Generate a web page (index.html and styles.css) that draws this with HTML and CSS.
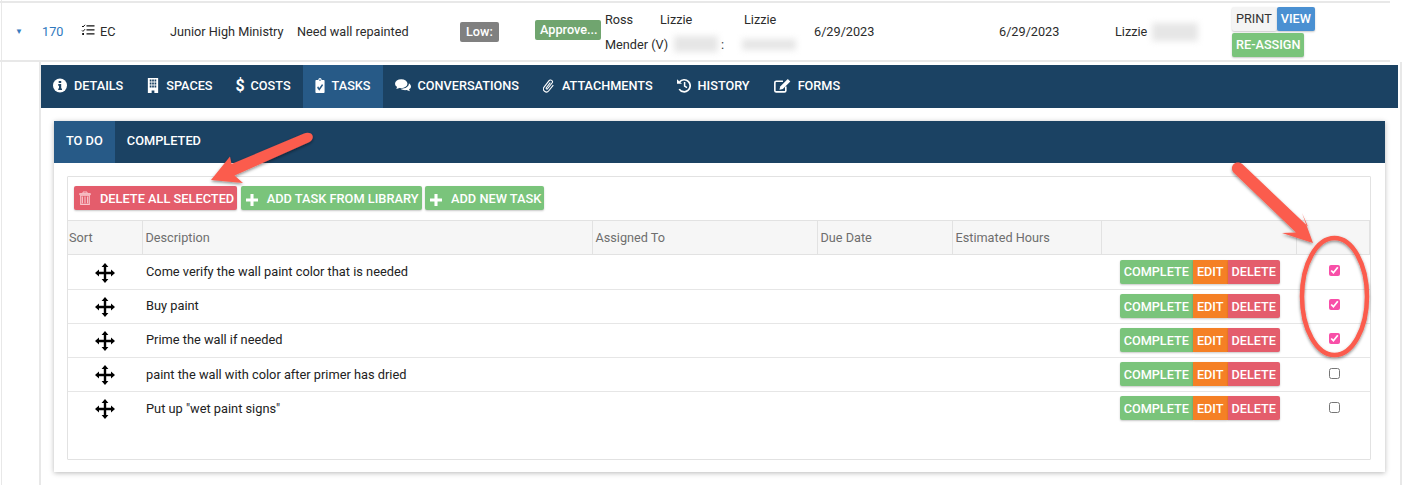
FILE: index.html
```html
<!DOCTYPE html>
<html lang="en">
<head>
<meta charset="utf-8">
<title>Tasks</title>
<link rel="stylesheet" href="styles.css">
</head>
<body>
<svg width="0" height="0" class="defs">
  <defs>
    <symbol id="move" viewBox="0 0 20 20">
      <path d="M10 0 13.4 4H11.2V8.8H16V6.6L20 10 16 13.4V11.2H11.2V16H13.4L10 20 6.6 16H8.8V11.2H4V13.4L0 10 4 6.6V8.8H8.8V4H6.6Z" fill="#000"/>
    </symbol>
    <symbol id="plus" viewBox="0 0 14 14">
      <path d="M5.2 0H8.8V5.2H14V8.8H8.8V14H5.2V8.8H0V5.2H5.2Z" fill="#fff"/>
    </symbol>
  </defs>
</svg>
<div class="page">
  <div class="job-row">
    <span class="caret">▼</span>
    <a class="job-id">170</a>
    <span class="job-type">
      <svg class="list-icon" viewBox="0 0 14 12"><path d="M1 2 2 3 4 .8M1 6.4 2 7.4 4 5.2" fill="none" stroke="#111" stroke-width="1"/><path d="M5.5 1.2H13.5V2.6H5.5ZM5.5 5.2H13.5V6.6H5.5ZM5.5 9.2H13.5V10.6H5.5ZM1.2 9.1H3V10.9H1.2Z" fill="#111"/></svg>
      EC
    </span>
    <span>Junior High Ministry</span>
    <span>Need wall repainted</span>
    <span><b class="label label-low">Low:</b></span>
    <span><b class="label label-approved">Approve...</b></span>
    <div class="stack">
      <span>Ross</span>
      <span>Mender (V)</span>
    </div>
    <div class="stack">
      <span>Lizzie</span>
      <span class="with-blur"><i class="blur blur-a"></i>:</span>
    </div>
    <div class="stack">
      <span>Lizzie</span>
      <span class="with-blur"><i class="blur blur-b"></i></span>
    </div>
    <span>6/29/2023</span>
    <span>6/29/2023</span>
    <span class="with-blur">Lizzie<i class="blur blur-c"></i></span>
    <div class="job-actions">
      <div class="action-line">
        <a class="btn btn-light">PRINT</a><a class="btn btn-blue">VIEW</a>
      </div>
      <a class="btn btn-green">RE-ASSIGN</a>
    </div>
  </div>

  <div class="detail">
    <nav class="main-tabs">
      <a class="main-tab">
        <svg class="tab-icon" viewBox="0 0 14 14"><circle cx="7" cy="7" r="7" fill="#fff"/><path d="M5.7 2.4H8.2V4.5H5.7ZM5.2 5.6H8.2V10H9V11.6H5.2V10H6V7.2H5.2Z" fill="#1b4263"/></svg>
        DETAILS</a>
      <a class="main-tab">
        <svg class="tab-icon icon-narrow" viewBox="0 0 14 15" preserveAspectRatio="none"><path d="M1 0H13V15H8.6V12.4H5.4V15H1Z" fill="#fff"/><path d="M3.2 1.6H5.2V3.6H3.2ZM6 1.6H8V3.6H6ZM8.8 1.6H10.8V3.6H8.8ZM3.2 4.6H5.2V6.6H3.2ZM6 4.6H8V6.6H6ZM8.8 4.6H10.8V6.6H8.8ZM3.2 7.6H5.2V9.6H3.2ZM6 7.6H8V9.6H6ZM8.8 7.6H10.8V9.6H8.8Z" fill="#1b4263"/></svg>
        SPACES</a>
      <a class="main-tab tab-dollar">
        <span class="dollar">$</span>
        COSTS</a>
      <a class="main-tab is-active">
        <svg class="tab-icon icon-clip" viewBox="0 0 14 15" preserveAspectRatio="none"><path d="M1.5 2H4.6C4.8.7 5.8 0 7 0S9.2.7 9.4 2H12.5C13 2 13.4 2.4 13.4 3V14C13.4 14.6 13 15 12.5 15H1.5C1 15 .6 14.6.6 14V3C.6 2.4 1 2 1.5 2Z" fill="#fff"/><path d="M3.6 9 6 11.4 10.6 6.6" fill="none" stroke="#275a87" stroke-width="2"/><circle cx="7" cy="2.2" r=".9" fill="#275a87"/></svg>
        TASKS</a>
      <a class="main-tab">
        <svg class="tab-icon icon-talk" viewBox="0 0 18 14"><ellipse cx="7" cy="5" rx="7" ry="5" fill="#fff"/><path d="M2.5 8 1.5 11 6 9.4Z" fill="#fff"/><path d="M15.7 4.6C17 5.5 18 6.8 18 8.1 18 9.5 17.1 10.6 15.8 11.3L16.8 13.6 13 12.2C11 12.5 8 12.2 6.4 10.7 11 11 15.6 9 15.7 4.6Z" fill="#fff"/></svg>
        CONVERSATIONS</a>
      <a class="main-tab">
        <svg class="tab-icon icon-narrow" viewBox="0 0 14 15"><path d="M10 4v8.5a3.5 3.5 0 0 1-7 0V3a2.2 2.2 0 0 1 4.4 0v8.5a.9.9 0 0 1-1.8 0V4" fill="none" stroke="#fff" stroke-width="1.3" transform="rotate(38 7 7.5) translate(.6 0)"/></svg>
        ATTACHMENTS</a>
      <a class="main-tab">
        <svg class="tab-icon" viewBox="0 0 14 14"><path d="M2.6 3.4A6 6 0 1 1 2.2 10.6" fill="none" stroke="#fff" stroke-width="1.7"/><path d="M0 .8 5 5.2H0Z" fill="#fff"/><path d="M7.6 3.6V7.6L10 9.2" fill="none" stroke="#fff" stroke-width="1.5"/></svg>
        HISTORY</a>
      <a class="main-tab">
        <svg class="tab-icon icon-form" viewBox="0 0 18 15"><path d="M9.5 3H2.4C1.5 3 .9 3.6.9 4.5V13C.9 13.9 1.5 14.3 2.4 14.3H11C11.9 14.3 12.5 13.9 12.5 13V8.5" fill="none" stroke="#fff" stroke-width="1.7"/><path d="M14.6.6 17.3 3.3 9.3 11.3 5.8 12 6.6 8.6Z" fill="#fff"/></svg>
        FORMS</a>
    </nav>

    <section class="panel">
      <div class="sub-tabs">
        <a class="sub-tab is-active">TO DO</a>
        <a class="sub-tab">COMPLETED</a>
      </div>
      <div class="panel-body">
        <div class="task-box">
          <div class="toolbar">
            <a class="btn btn-red btn-tool">
              <svg class="trash" viewBox="0 0 12 14"><path d="M.6 2.6H11.4V3.7H.6ZM4 2.6V1H8V2.6" fill="none" stroke="#f8c6cc" stroke-width="1"/><path d="M1.7 4.2H10.3V13.4H1.7ZM3.4 5.4V12.2M6 5.4V12.2M8.6 5.4V12.2" fill="none" stroke="#f8c6cc" stroke-width="1.1"/></svg>
              DELETE ALL SELECTED</a>
            <a class="btn btn-green btn-tool"><svg class="plus"><use href="#plus"/></svg>ADD TASK FROM LIBRARY</a>
            <a class="btn btn-green btn-tool"><svg class="plus"><use href="#plus"/></svg>ADD NEW TASK</a>
          </div>
          <table class="tasks">
            <colgroup>
              <col class="c-sort"><col class="c-desc"><col class="c-assign"><col class="c-due"><col class="c-hours"><col class="c-act"><col class="c-check">
            </colgroup>
            <thead>
              <tr><th>Sort</th><th>Description</th><th>Assigned To</th><th>Due Date</th><th>Estimated Hours</th><th></th><th></th></tr>
            </thead>
            <tbody>
              <tr>
                <td class="sort"><svg class="move"><use href="#move"/></svg></td>
                <td class="desc">Come verify the wall paint color that is needed</td><td></td><td></td><td></td>
                <td class="acts"><div class="row-actions"><a class="btn btn-green">COMPLETE</a><a class="btn btn-orange">EDIT</a><a class="btn btn-red">DELETE</a></div></td>
                <td class="check"><input type="checkbox" checked></td>
              </tr>
              <tr>
                <td class="sort"><svg class="move"><use href="#move"/></svg></td>
                <td class="desc">Buy paint</td><td></td><td></td><td></td>
                <td class="acts"><div class="row-actions"><a class="btn btn-green">COMPLETE</a><a class="btn btn-orange">EDIT</a><a class="btn btn-red">DELETE</a></div></td>
                <td class="check"><input type="checkbox" checked></td>
              </tr>
              <tr>
                <td class="sort"><svg class="move"><use href="#move"/></svg></td>
                <td class="desc">Prime the wall if needed</td><td></td><td></td><td></td>
                <td class="acts"><div class="row-actions"><a class="btn btn-green">COMPLETE</a><a class="btn btn-orange">EDIT</a><a class="btn btn-red">DELETE</a></div></td>
                <td class="check"><input type="checkbox" checked></td>
              </tr>
              <tr>
                <td class="sort"><svg class="move"><use href="#move"/></svg></td>
                <td class="desc">paint the wall with color after primer has dried</td><td></td><td></td><td></td>
                <td class="acts"><div class="row-actions"><a class="btn btn-green">COMPLETE</a><a class="btn btn-orange">EDIT</a><a class="btn btn-red">DELETE</a></div></td>
                <td class="check"><input type="checkbox"></td>
              </tr>
              <tr>
                <td class="sort"><svg class="move"><use href="#move"/></svg></td>
                <td class="desc">Put up "wet paint signs"</td><td></td><td></td><td></td>
                <td class="acts"><div class="row-actions"><a class="btn btn-green">COMPLETE</a><a class="btn btn-orange">EDIT</a><a class="btn btn-red">DELETE</a></div></td>
                <td class="check"><input type="checkbox"></td>
              </tr>
            </tbody>
          </table>
        </div>
      </div>
    </section>
  </div>
</div>

<svg class="annotations" viewBox="0 0 1403 485" width="1403" height="485">
  <defs>
    <filter id="shade" x="-20%" y="-20%" width="140%" height="140%">
      <feDropShadow dx="0" dy="1.5" stdDeviation="1.5" flood-color="#000" flood-opacity=".45"/>
    </filter>
  </defs>
  <g filter="url(#shade)" fill="#fb5b4d">
    <path d="M304 133.5C307 132.2 311 132.4 312.4 135.2 313.6 138 312 140.8 309 142.2L234.5 175.5 243 183 211 180 230 156.5 231.5 164Z"/>
    <path d="M1233.5 164.2C1236 161.6 1240 162 1242.5 164.2L1308 226.5 1302 213 1313 243 1282 233 1296 232.6 1233.5 172.5C1231.4 170 1231.4 166.6 1233.5 164.2Z"/>
    <ellipse cx="1334.5" cy="296.5" rx="32.5" ry="58.5" fill="none" stroke="#fb5b4d" stroke-width="4.5"/>
  </g>
</svg>
</body>
</html>
```

FILE: styles.css
```css
* { box-sizing: border-box; }

html, body {
  margin: 0;
  height: 485px;
  overflow: hidden;
  background: #fff;
}

body {
  position: relative;
  font-family: Roboto, "Liberation Sans", sans-serif;
  font-size: 12.7px;
  color: #222;
}

.defs { position: absolute; }

a { color: inherit; text-decoration: none; }

.page {
  height: 485px;
  margin-left: 1px;
  padding: 1px 1px 0 0;
  border-left: 1px solid #e8e8e8;
}

.job-row {
  display: grid;
  grid-template-columns: 27px 39px 89px 127px 163px 75px 70px 55px 84px 70px 185px 116px 116px 1fr;
  align-items: center;
  height: 61px;
  margin: 0 12px 0 -2px;
  padding-left: 15px;
  border-top: 2px solid #e8e8e8;
  border-bottom: 2px solid #e8e8e8;
  color: #2b2b2b;
  white-space: nowrap;
}

.caret {
  color: #3a7cc0;
  font-size: 8px;
}

.job-id { color: #2f78bd; }

.job-type {
  display: flex;
  align-items: center;
  gap: 5px;
}

.list-icon { width: 14px; height: 12px; margin-bottom: 4px; }

.label {
  display: inline-block;
  height: 20px;
  padding: 2px 5px;
  border-radius: 2px;
  font-weight: 500;
  font-size: 12.7px;
  line-height: 16px;
  color: #fff;
  white-space: nowrap;
}

.label-low { background: #808080; padding: 2px 6px; }
.label-approved { background: #70a56f; width: 66px; overflow: hidden; }

.stack {
  display: flex;
  flex-direction: column;
  gap: 10px;
  line-height: 15px;
}

.with-blur { display: flex; align-items: center; }
.stack .with-blur { height: 15px; }

.blur {
  display: block;
  background: #e6e6e6;
  filter: blur(3px);
}

.blur-a { width: 44px; height: 16px; margin-left: 14px; margin-right: 3px; }
.blur-b { width: 54px; height: 11px; margin-left: -2px; }
.blur-c { width: 46px; height: 18px; margin-left: 5px; }

.job-actions {
  display: flex;
  flex-direction: column;
  gap: 2px;
  align-items: flex-start;
  padding-left: 1px;
}

.action-line { display: flex; }

.btn {
  display: inline-flex;
  align-items: center;
  height: 24px;
  padding: 0 4px;
  border-radius: 2px;
  color: #fff;
  font-weight: 500;
  font-size: 12.7px;
  white-space: nowrap;
  box-shadow: 0 1px 2px rgba(0, 0, 0, .22);
}

.btn-light { background: #f4f4f4; color: #333; font-weight: 400; padding-right: 5px; }
.btn-blue { background: #4a90d2; }
.btn-green { background: #7ac47b; }
.btn-red { background: #e45d6c; }
.btn-orange { background: #f58025; }

.detail {
  margin-left: 37px;
  height: 423px;
  padding-top: 3px;
  border-left: 2px solid #e8e8e8;
  border-right: 2px solid #e8e8e8;
}

.main-tabs {
  display: flex;
  height: 43px;
  width: 1357px;
  background: #1b4263;
  color: #fff;
  font-weight: 500;
  font-size: 12.7px;
}

.main-tab {
  display: flex;
  align-items: center;
  gap: 7px;
  height: 100%;
  padding: 0 12px 2px;
}

.main-tab.is-active { background: #275a87; }
.main-tab.tab-dollar { gap: 6px; padding-left: 11px; }

.tab-icon { width: 14px; height: 15px; flex: none; }
.icon-narrow { width: 12px; }
.icon-clip { width: 10px; }
.icon-talk { width: 16px; }
.icon-form { width: 17px; }
.dollar { font-size: 16px; font-weight: 700; width: 9px; }

.panel {
  width: 1331px;
  height: 351px;
  margin: 13px 0 0 13px;
  background: #fff;
  box-shadow: 0 1px 5px rgba(0, 0, 0, .28);
}

.sub-tabs {
  display: flex;
  height: 42px;
  background: #1b4263;
  color: #fff;
  font-weight: 500;
  font-size: 12.8px;
}

.sub-tab {
  display: flex;
  align-items: center;
  padding: 0 12px 3px;
}

.sub-tab.is-active { background: #275a87; }

.panel-body { padding: 13px 14px 12px 13px; }

.task-box {
  height: 284px;
  border: 1px solid #e2e2e2;
  border-radius: 1px;
  padding-top: 9px;
}

.toolbar {
  display: flex;
  gap: 3px;
  padding-left: 6px;
  margin-bottom: 10px;
}

.btn-tool { padding: 0 3px 0 5px; gap: 9px; font-size: 12.8px; margin-right: .5px; }

.trash { width: 12px; height: 14px; }
.plus { width: 12px; height: 12px; margin-top: 3px; }

.tasks {
  width: 1302px;
  table-layout: fixed;
  border-collapse: collapse;
}

.c-sort { width: 74px; }
.c-desc { width: 450px; }
.c-assign { width: 225px; }
.c-due { width: 135px; }
.c-hours { width: 149px; }
.c-act { width: 195px; }
.c-check { width: 74px; }

.tasks th {
  height: 34px;
  padding: 0 3px;
  background: #f6f6f6;
  border: 1px solid #e2e2e2;
  text-align: left;
  font-weight: 400;
  color: #6e6e6e;
}

.tasks th:first-child { padding-left: 1px; border-left: 0; }
.tasks th:last-child { border-right: 2px solid #e2e2e2; }

.tasks td {
  height: 34px;
  padding: 0 3px 1px;
  border-bottom: 1px solid #e6e6e6;
  color: #222;
}

.tasks tbody tr:first-child td { height: 35px; }
.tasks tbody tr:last-child td { border-bottom: 0; }

.tasks td.desc { padding-left: 4px; font-size: 12.8px; }
.tasks tbody tr:nth-child(2) td.desc,
.tasks tbody tr:nth-child(3) td.desc { padding-bottom: 3px; }

.tasks td.sort { text-align: center; padding: 1px 0 0; }

.move { width: 20px; height: 20px; display: block; margin: 0 auto; }

.row-actions {
  display: flex;
  justify-content: flex-end;
  padding-right: 13px;
}

.row-actions .btn-green { border-radius: 2px 0 0 2px; }
.row-actions .btn-orange { border-radius: 0; }
.row-actions .btn-red { border-radius: 0 2px 2px 0; }

.tasks td.check { text-align: center; padding: 0 0 2px 2px; }
.tasks tbody tr:nth-child(n+4) td.check { padding-bottom: 0; }

.check input {
  width: 11px;
  height: 11px;
  margin: 0;
  accent-color: #f84fa8;
}

.annotations {
  position: absolute;
  left: 0;
  top: 0;
  pointer-events: none;
}
```
